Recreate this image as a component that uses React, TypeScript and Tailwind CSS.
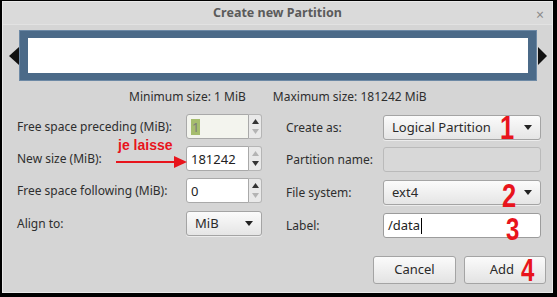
const FONT = { fontFamily: '"Noto Sans", "Open Sans", sans-serif' };
const RED = { fontFamily: '"Liberation Sans", Arial, sans-serif' };

function Tri({ dir, light }: { dir: 'up' | 'down'; light?: boolean }) {
  const fill = light ? '#b4b4b4' : '#333333';
  if (dir === 'up') return <svg width="7" height="5" viewBox="0 0 7 5"><path d="M3.5 0 L7 5 L0 5 Z" fill={fill} /></svg>;
  return <svg width="7" height="5" viewBox="0 0 7 5"><path d="M0 0 L7 0 L3.5 5 Z" fill={fill} /></svg>;
}

function Spin({ value, upLight, downLight, selected }: { value: string; upLight?: boolean; downLight?: boolean; selected?: boolean }) {
  return (
    <div className="flex h-[25px] w-[76px]">
      <div className={`flex w-[63px] items-center rounded-l-[3px] border border-[#a9a9a9] px-[4px] ${selected ? 'bg-[#f3f4ee]' : 'bg-white'}`}>
        {selected ? (
          <span className="bg-[#a6bd6e] px-[1px] text-[13px] leading-[16px] text-[#7c7c7c]">1</span>
        ) : (
          <span className="text-[13px] leading-[16px] text-[#222]">{value}</span>
        )}
      </div>
      <div className="flex w-[13px] flex-col items-center justify-between rounded-r-[3px] border border-l-0 border-[#b5b5b5] bg-[#e9e9e9] py-[4px]">
        <Tri dir="up" light={upLight} />
        <Tri dir="down" light={downLight} />
      </div>
    </div>
  );
}

function Combo({ value, w }: { value: string; w: string }) {
  return (
    <div className={`flex h-[25px] ${w} items-center justify-between rounded-[3px] border border-[#a4a4a4] bg-gradient-to-b from-[#fbfbfb] to-[#e5e5e5] pl-[8px] pr-[8px] shadow-[0_1px_0_#ececec]`}>
      <span className="text-[13px] text-[#2a2a2a]">{value}</span>
      <svg width="8" height="5" viewBox="0 0 8 5"><path d="M0 0 L8 0 L4 5 Z" fill="#222" /></svg>
    </div>
  );
}

function Row({ label, w, children }: { label: string; w: string; children: React.ReactNode }) {
  return (
    <div className="flex h-[25px] items-center">
      <div className={`${w} text-[12px] text-[#2e2e2e]`}>{label}</div>
      {children}
    </div>
  );
}

export default function App() {
  return (
    <div className="h-[297px] w-[557px] overflow-hidden bg-black pl-[2px] pt-[1px]" style={FONT}>
      <div className="relative flex h-[292px] w-[551px] flex-col border border-[#e9e9e9] bg-[#d5d5d5]">
        {/* Title bar */}
        <div className="relative flex h-[23px] items-center justify-center border-b border-[#e2e2e2] bg-[#dadada]">
          <span className="text-[12.5px] font-bold text-[#5b5b5b]">Create new Partition</span>
          <span className="absolute right-[8px] top-[2px] text-[14px] text-[#8a8a8a]">×</span>
        </div>

        {/* Partition graphic */}
        <div className="mt-[6px] flex items-center pl-[6px]">
          <svg width="11" height="18" viewBox="0 0 11 18"><path d="M0 9 L10 0 L10 18 Z" fill="#111" /></svg>
          <div className="h-[49px] w-[516px] border-x-[8px] border-y-[7px] border-[#4b6a88] bg-white shadow-[0_0_0_1px_#6d89a5]" />
          <svg className="ml-[1px]" width="11" height="18" viewBox="0 0 11 18"><path d="M1 0 L10 9 L1 18 Z" fill="#111" /></svg>
        </div>

        {/* Min / max */}
        <div className="mt-[8px] flex h-[17px] items-center gap-[27px] pl-[126px] text-[12px] text-[#2e2e2e]">
          <span>Minimum size: 1 MiB</span>
          <span>Maximum size: 181242 MiB</span>
        </div>

        {/* Form */}
        <div className="mt-[9px] flex pl-[14px]">
          <div className="flex flex-col gap-[7px]">
            <Row label="Free space preceding (MiB):" w="w-[169px]">
              <Spin value="1" selected downLight />
            </Row>
            <Row label="New size (MiB):" w="w-[169px]">
              <Spin value="181242" upLight />
            </Row>
            <Row label="Free space following (MiB):" w="w-[169px]">
              <Spin value="0" downLight />
            </Row>
            <div className="mt-[1px]">
              <Row label="Align to:" w="w-[169px]">
                <Combo value="MiB" w="w-[76px]" />
              </Row>
            </div>
          </div>
          <div className="ml-[24px] flex flex-col gap-[7px] pt-[1px]">
            <Row label="Create as:" w="w-[97px]">
              <Combo value="Logical Partition" w="w-[158px]" />
            </Row>
            <Row label="Partition name:" w="w-[97px]">
              <div className="h-[25px] w-[158px] rounded-[3px] border border-[#bababa] bg-[#d8d8d8]" />
            </Row>
            <div className="mt-[1px]">
              <Row label="File system:" w="w-[97px]">
                <Combo value="ext4" w="w-[158px]" />
              </Row>
            </div>
            <div className="mt-[1px]">
              <Row label="Label:" w="w-[97px]">
                <div className="flex h-[25px] w-[158px] items-center rounded-[3px] border border-[#9c9c9c] bg-white pl-[4px]">
                  <span className="text-[13px] text-[#222]">/data</span>
                  <span className="ml-[1px] h-[16px] w-[1px] bg-black" />
                </div>
              </Row>
            </div>
          </div>
        </div>

        {/* Buttons */}
        <div className="mt-[18px] flex justify-end gap-[8px] pr-[6px]">
          <button className="h-[28px] w-[83px] rounded-[3px] border border-[#a4a4a4] bg-gradient-to-b from-[#fbfbfb] to-[#e3e3e3] text-[13px] text-[#2a2a2a]">Cancel</button>
          <button className="h-[28px] w-[82px] rounded-[3px] border border-[#a4a4a4] bg-gradient-to-b from-[#fbfbfb] to-[#e3e3e3] pr-[31px] text-right text-[13px] text-[#2a2a2a]">Add</button>
        </div>

        {/* Red annotations */}
        <div className="absolute left-[115px] top-[136px] text-[14px] font-bold leading-none text-[#e8141c]" style={RED}>je laisse</div>
        <svg className="absolute left-[113px] top-[153px]" width="72" height="14" viewBox="0 0 72 14">
          <path d="M0 6 L60 6 L60 8 L0 8 Z" fill="#e8141c" />
          <path d="M58 1 L71 7 L58 13 Z" fill="#e8141c" />
        </svg>
        <div className="absolute left-[497px] top-[108px] origin-left scale-x-75 text-[34px] font-bold leading-none text-[#e8141c]" style={RED}>1</div>
        <div className="absolute left-[499px] top-[176px] origin-left scale-x-75 text-[34px] font-bold leading-none text-[#e8141c]" style={RED}>2</div>
        <div className="absolute left-[503px] top-[211px] origin-left scale-x-75 text-[32px] font-bold leading-none text-[#e8141c]" style={RED}>3</div>
        <div className="absolute left-[518px] top-[252px] origin-left scale-x-75 text-[32px] font-bold leading-none text-[#e8141c]" style={RED}>4</div>
      </div>
    </div>
  );
}
